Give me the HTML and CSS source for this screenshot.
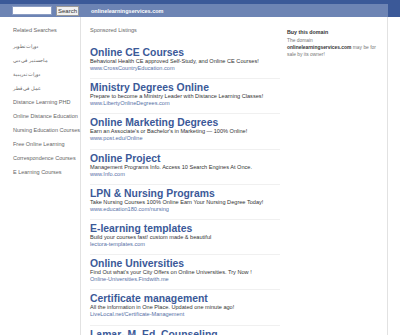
FILE: index.html
```html
<!DOCTYPE html>
<html lang="en">
<head>
  <meta charset="UTF-8" />
  <title>onlinelearningservices.com</title>
  <meta name="viewport" content="width=device-width, initial-scale=1.0" />
  <link rel="stylesheet" href="styles.css">
</head>
<body>
  <header class="top">
    <div class="bar">
      <form class="search">
        <input type="text" class="search-box" />
        <button type="button" class="search-btn">Search</button>
      </form>
      <span class="domain">onlinelearningservices.com</span>
    </div>
  </header>

  <div class="page">
    <aside class="related">
      <h3>Related Searches</h3>
      <ul>
        <li><a href="#" dir="rtl" class="ar">دورات تطوير</a></li>
        <li><a href="#" dir="rtl" class="ar">ماجستير في دبي</a></li>
        <li><a href="#" dir="rtl" class="ar">دورات تدريبية</a></li>
        <li><a href="#" dir="rtl" class="ar">عمل في قطر</a></li>
        <li><a href="#">Distance Learning PHD</a></li>
        <li><a href="#">Online Distance Education</a></li>
        <li><a href="#">Nursing Education Courses</a></li>
        <li><a href="#">Free Online Learning</a></li>
        <li><a href="#">Correspondence Courses</a></li>
        <li><a href="#">E Learning Courses</a></li>
      </ul>
    </aside>

    <main class="listings">
      <h3>Sponsored Listings</h3>

      <div class="ad">
        <a class="ad-title" href="#">Online CE Courses</a>
        <p>Behavioral Health CE approved Self-Study, and Online CE Courses!</p>
        <a class="ad-url" href="#">www.CrossCountryEducation.com</a>
      </div>
      <div class="ad">
        <a class="ad-title" href="#">Ministry Degrees Online</a>
        <p>Prepare to become a Ministry Leader with Distance Learning Classes!</p>
        <a class="ad-url" href="#">www.LibertyOnlineDegrees.com</a>
      </div>
      <div class="ad">
        <a class="ad-title" href="#">Online Marketing Degrees</a>
        <p>Earn an Associate's or Bachelor's in Marketing — 100% Online!</p>
        <a class="ad-url" href="#">www.post.edu/Online</a>
      </div>
      <div class="ad">
        <a class="ad-title" href="#">Online Project</a>
        <p>Management Programs Info. Access 10 Search Engines At Once.</p>
        <a class="ad-url" href="#">www.Info.com</a>
      </div>
      <div class="ad">
        <a class="ad-title" href="#">LPN &amp; Nursing Programs</a>
        <p>Take Nursing Courses 100% Online Earn Your Nursing Degree Today!</p>
        <a class="ad-url" href="#">www.education180.com/nursing</a>
      </div>
      <div class="ad">
        <a class="ad-title" href="#">E-learning templates</a>
        <p>Build your courses fast! custom made &amp; beautiful</p>
        <a class="ad-url" href="#">lectora-templates.com</a>
      </div>
      <div class="ad">
        <a class="ad-title" href="#">Online Universities</a>
        <p>Find Out what's your City Offers on Online Universities. Try Now !</p>
        <a class="ad-url" href="#">Online-Universities.Findwith.me</a>
      </div>
      <div class="ad">
        <a class="ad-title" href="#">Certificate management</a>
        <p>All the information in One Place. Updated one minute ago!</p>
        <a class="ad-url" href="#">LiveLocal.net/Certificate-Management</a>
      </div>
      <div class="ad">
        <a class="ad-title" href="#">Lamar- M. Ed. Counseling</a>
        <p>Earn your Master's in Counseling online from Lamar University.</p>
        <a class="ad-url" href="#">www.degree.lamar.edu</a>
      </div>
    </main>

    <aside class="buy">
      <h4>Buy this domain</h4>
      <p>The domain<br><strong>onlinelearningservices.com</strong> may be for sale by its owner!</p>
    </aside>
  </div>
</body>
</html>
```

FILE: styles.css
```css
:root {
  --dark-blue: #3b5998;
  --bar-blue: #6d84b4;
  --link-blue: #3b5998;
  --line: #e2e2e2;
  --text: #333333;
  --light-text: #666666;
}

body {
  margin: 0;
  font-family: "Liberation Sans", Arial, sans-serif;
  background-color: #ffffff;
  color: var(--text);
}

a {
  text-decoration: none;
}

.top {
  background-color: var(--dark-blue);
  padding-top: 4px;
}

.bar {
  width: 388px;
  height: 13px;
  background-color: var(--bar-blue);
  display: flex;
  align-items: center;
}

.search {
  display: flex;
  align-items: center;
  margin: 0 0 0 12px;
}

.search-box {
  width: 40px;
  height: 9px;
  padding: 0;
  border: 1px solid #8b9dc3;
  box-sizing: border-box;
  background-color: #ffffff;
}

.search-btn {
  margin-left: 4px;
  height: 10px;
  width: 23px;
  padding: 0;
  border: 1px solid #999;
  background-color: #f0f0f0;
  color: #333;
  font-family: inherit;
  font-size: 6px;
  line-height: 8px;
}

.domain {
  margin-left: 12px;
  color: #ffffff;
  font-size: 5.5px;
  font-weight: bold;
}

.page {
  width: 388px;
  display: flex;
  border-right: 1px solid var(--line);
  box-sizing: border-box;
  min-height: 318px;
}

.related {
  width: 81px;
  flex-shrink: 0;
  border-right: 1px solid var(--line);
  box-sizing: border-box;
  padding: 10px 0 0 13px;
}

.related h3,
.listings h3 {
  margin: 0;
  font-size: 5.5px;
  font-weight: normal;
  color: var(--light-text);
}

.related ul {
  list-style: none;
  margin: 10px 0 0;
  padding: 0;
}

.related li {
  height: 14px;
  font-size: 5.5px;
  line-height: 7px;
}

.related a {
  color: var(--light-text);
}

.related .ar {
  font-size: 4.5px;
}

.listings {
  width: 190px;
  flex-shrink: 0;
  padding: 10px 0 0 9px;
}

.listings h3 {
  margin-bottom: 11px;
}

.ad {
  height: 35.2px;
  border-bottom: 1px solid #f0f0f0;
  box-sizing: border-box;
  padding-top: 3px;
  font-size: 5.6px;
  white-space: nowrap;
}

.ad-title {
  display: block;
  color: var(--link-blue);
  font-size: 10.4px;
  font-weight: bold;
  line-height: 11px;
}

.ad p {
  margin: 0;
  line-height: 7px;
  color: var(--text);
}

.ad-url {
  display: block;
  line-height: 7px;
  color: #5670a6;
}

.buy {
  flex: 1;
  padding: 12px 0 0 7px;
  font-size: 4.9px;
  color: #777;
}

.buy h4 {
  margin: 0 0 2px;
  font-size: 5.3px;
  color: #333;
}

.buy p {
  margin: 0;
  line-height: 7px;
  width: 96px;
}

.buy strong {
  color: #333;
}
```
